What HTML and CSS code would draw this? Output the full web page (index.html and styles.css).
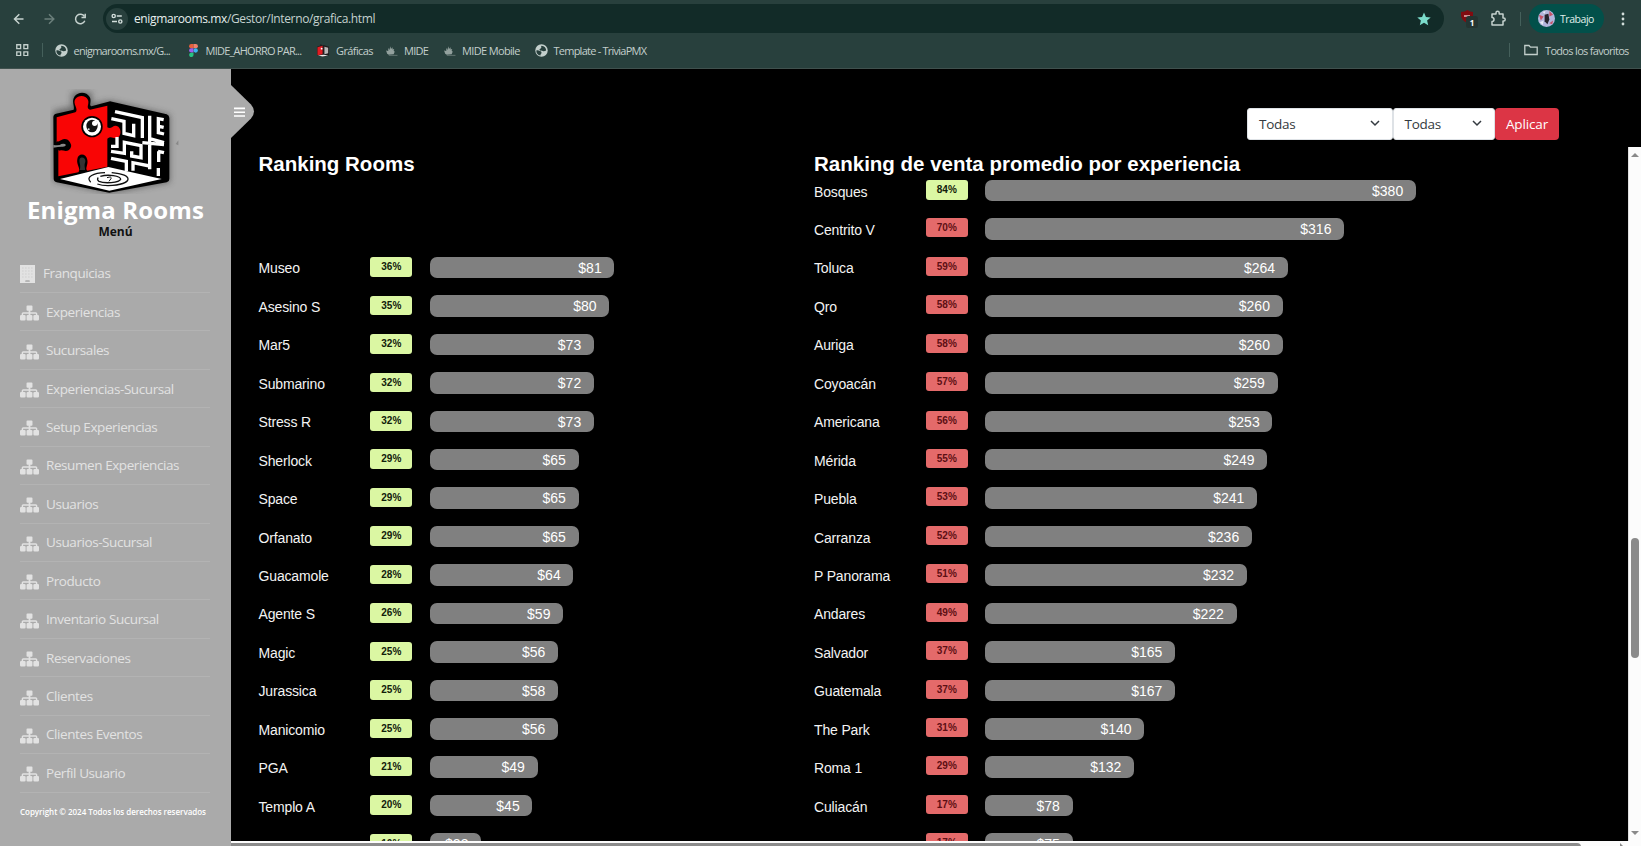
FILE: index.html
```html
<!DOCTYPE html>
<html lang="es">
<head>
<meta charset="utf-8">
<title>Enigma Rooms</title>
<link rel="stylesheet" href="styles.css">
<script src="app.js" defer></script>
</head>
<body>
<svg class="defs" aria-hidden="true">
  <symbol id="sitemap" viewBox="0 0 640 512"><path d="M250 0h140q30 0 30 30v120q0 30-30 30h-40v50h180q54 0 54 54v36h16q40 0 40 40v110q0 42-40 42H490q-40 0-40-42V360q0-40 40-40h44v-40H350v40h30q40 0 40 40v110q0 42-40 42H260q-40 0-40-42V360q0-40 40-40h30v-40H106v40h44q40 0 40 40v110q0 42-40 42H40q-40 0-40-42V360q0-40 40-40h16v-36q0-54 54-54h180v-50h-40q-30 0-30-30V30q0-30 30-30z"/></symbol>
  <symbol id="globe" viewBox="0 0 24 24"><circle cx="12" cy="12" r="11.5" fill="#c3cfcc"/><path d="M2.500 12C5 11 7 12.500 9 13s3 1 3 3-2 2-2 5C5 20.500 2 17 2.500 12zM12 3c-2 2 1 3-1 5s-3 1-2.500 3 4 1 6 2 4 0 6-1c0-5-3-8.500-8.500-9z" fill="#28403d"/></symbol>
  <symbol id="ship" viewBox="0 0 24 24"><path d="M2 12l4 1V7l2 4 2-7 1 5 3-3v4l3-1-1 4 2 1-2 5-9 1-3-2z" fill="#93a19e"/><path d="M7 21h16" stroke="#5d706d" stroke-width="2"/></symbol>
</svg>
<header class="browser">
  <div class="toolbar">
    <svg class="nav-icons" viewBox="0 0 92 24"><g fill="none" stroke="#c6d2cf" stroke-width="1.500"><path d="M9 12h-9M4.800 7.200L0 12l4.800 4.800" transform="translate(14.500 0)"/><path d="M44.500 12h9M49 7.200l4.800 4.800-4.800 4.800" stroke="#6b7f7b"/><path d="M84.500 9.500a4.800 4.800 0 1 0 .3 4.300"/><path d="M85.200 6.800v3.700h-3.700"/></g></svg>
    <div class="omnibox">
      <svg class="tune" viewBox="0 0 22 22"><circle cx="11" cy="11" r="11" fill="#28403d"/><g fill="none" stroke="#d3dedb" stroke-width="1.400"><circle cx="7.700" cy="8" r="1.600"/><path d="M10.800 8h5M6 13.500h5"/><circle cx="14.300" cy="13.500" r="1.600"/></g></svg>
      <span class="url"><b>enigmarooms.mx</b>/Gestor/Interno/grafica.html</span>
      <svg class="star" viewBox="0 0 24 24"><path d="M12 1l3.300 7.600 8.200.7-6.200 5.400 1.900 8-7.200-4.300-7.200 4.300 1.900-8L.5 9.300l8.200-.7z" fill="#7bdccb"/></svg>
    </div>
    <svg class="shield" viewBox="0 0 20 20"><path d="M1 3q4 0 6.500-2Q10 3 13 3v4q-1 5-5.500 7Q2 12 1 7z" fill="#800b10"/><path d="M4 7h6" stroke="#e9b8b8" stroke-width="1.500"/><rect x="6" y="7" width="12" height="12" rx="2.500" fill="#243532"/><text x="12" y="16.500" class="badge-count">1</text></svg>
    <svg class="puzzle" viewBox="0 0 18 18"><path d="M3 4h4V2.800a1.600 1.600 0 0 1 3.200 0V4H14v4h.7a1.500 1.500 0 0 1 0 3H14v4H3v-3.500a2 2 0 0 0 0-4z" fill="none" stroke="#c6d2cf" stroke-width="1.500" stroke-linejoin="round"/></svg>
    <span class="divider"></span>
    <div class="profile">
      <svg class="avatar" viewBox="0 0 18 18"><circle cx="9" cy="9" r="9" fill="#b3b6dc"/><path d="M1 5l5 2-3 4zM12 1l4 4-4 2zM12 14l4-3-1 4z" fill="#c75367"/><path d="M7 5l4-1 1 6-2 5-3-3z" fill="#26242d"/><path d="M2 13l4-2-1 5zM5 2l3-1-1 3z" fill="#e9edf6"/></svg>
      <span class="profile-name">Trabajo</span>
    </div>
    <svg class="dots" viewBox="0 0 4 14"><g fill="#d3dedb"><circle cx="2" cy="2" r="1.400"/><circle cx="2" cy="7" r="1.400"/><circle cx="2" cy="12" r="1.400"/></g></svg>
  </div>
  <nav class="bookmarks">
    <svg class="apps" viewBox="0 0 13 13"><g fill="none" stroke="#c3cfcc" stroke-width="1.400"><path d="M.8.8h4v4h-4zM8.200.8h4v4h-4zM.8 8.200h4v4h-4zM8.200 8.200h4v4h-4z"/></g></svg>
    <span class="divider first"></span>
    <span class="mark m1"><svg><use href="#globe"/></svg>enigmarooms.mx/G...</span>
    <span class="mark m2"><svg viewBox="0 0 12 16"><path d="M6 0v5.300H3.200a2.650 2.650 0 0 1 0-5.300z" fill="#e8603c"/><path d="M6 0h2.800a2.650 2.650 0 0 1 0 5.300H6z" fill="#f0806b"/><path d="M6 5.300v5.300H3.200a2.650 2.650 0 0 1 0-5.300z" fill="#9c5cec"/><circle cx="8.700" cy="8" r="2.650" fill="#3bb4f0"/><path d="M3.200 10.700H6v2.500a2.700 2.700 0 1 1-2.800-2.500z" fill="#27c281"/></svg>MIDE_AHORRO PAR...</span>
    <span class="mark m3"><svg viewBox="0 0 14 14"><path d="M0 3l3-1 1-2 2 1.500L7 1l6 2v9l-7 2-6-2z" fill="#211d1e"/><path d="M.5 3.500L6 1.800V11L.5 12z" fill="#e21c22"/><path d="M8 3l4 1v6l-4 1z" fill="#b9b6b6"/><path d="M1 12.500l6-1 5 1-6 1z" fill="#eee"/><circle cx="5" cy="5" r="1" fill="#fff"/></svg>Gráficas</span>
    <span class="mark m4"><svg><use href="#ship"/></svg>MIDE</span>
    <span class="mark m5"><svg><use href="#ship"/></svg>MIDE Mobile</span>
    <span class="mark m6"><svg><use href="#globe"/></svg>Template - TriviaPMX</span>
    <span class="divider last"></span>
    <span class="mark all"><svg viewBox="0 0 14 12"><path d="M.8 10.500V1.500H5l1.500 1.700h6.700v7.300z" fill="none" stroke="#c3cfcc" stroke-width="1.300"/></svg>Todos los favoritos</span>
  </nav>
</header>
<div class="page">
  <aside class="sidebar">
    <svg class="logo" viewBox="150 75 395 315">
      <defs><filter id="soft" x="-10%" y="-10%" width="120%" height="120%"><feGaussianBlur stdDeviation="9"/></filter></defs>
      <path d="M160 140L215 128V85H275V120L330 110 510 152V355L330 388 160 352z" fill="#333" opacity=".55" filter="url(#soft)"/>
      <path d="M160 160Q160 151 168 149L221 137C225 128 213 112 224 97C235 82 260 83 269 99C276 112 266 124 274 127L325 113Q330 111 336 113L500 151Q508 154 508 162V345Q508 353 500 355L335 385Q328 387 320 385L170 355Q161 352 161 344z" fill="#000"/>
      <path d="M170 160L226 145C238 137 216 118 226 105C235 92 258 93 264 108C269 120 256 132 270 137L322 125V190C335 198 340 178 355 188C366 198 362 220 350 222C338 225 335 214 322 224V308L262 320C254 313 265 304 262 288C258 266 234 267 232 285C228 302 244 314 235 325L175 337V257C190 250 193 263 205 255C216 245 205 226 190 229C180 232 180 239 170 235z" fill="#f90505"/>
      <path d="M239 318C244 305 236 295 239 285C245 276 258 282 256 293C251 305 256 311 255 318z" fill="#333"/>
      <path d="M170 235C180 239 180 232 190 229C205 226 216 245 205 255C193 263 190 250 175 257" fill="none" stroke="#000" stroke-width="7"/>
      <path d="M160 243q19 3 24-3 10-3 14 3-3 7-14 5-9 0-24 3z" fill="#888"/>
      <circle cx="276" cy="188" r="32" fill="#000"/><circle cx="276" cy="188" r="27" fill="#fff"/><ellipse cx="276" cy="186" rx="17" ry="19" fill="#111"/><circle cx="284" cy="178" r="8" fill="#fff"/><circle cx="266" cy="196" r="3" fill="#ddd"/>
      <g fill="none" stroke="#fff" stroke-width="10">
        <path d="M345 143L427 161V222M334 164l38 8v36l29 7v-36"/>
        <path d="M449 155V316M427 236l65 6M449 224l43 12"/>
        <path d="M491 167l-16-3v42l17 4M491 190l-14-3"/>
        <path d="M333 247h18v-28M333 262l40 6v-33l50 10v36l-28-5v-14M333 283l46 9v30M399 320v-24l50 10"/>
        <path d="M476 262v32M492 266l-18-4M475 312v24"/>
      </g>
      <path d="M180 345L325 309 485 345 328 380z" fill="#fff"/>
      <g fill="none" stroke="#111" stroke-width="4"><path d="M272 355C255 338 282 327 315 326M335 326C402 331 402 361 324 365C310 365 300 363 292 360"/><path d="M301 337C324 330 362 335 362 346C358 357 312 359 297 352C291 348 292 343 295 341"/><path d="M321 341q15-5 12 3l-6 8" stroke-width="3"/></g>
      <path d="M527 240l8-11v15z" fill="#888"/>
    </svg>
    <h1 class="brand">Enigma Rooms</h1>
    <p class="menu-title">Menú</p>
    <ul class="menu">
      <li><svg class="building" viewBox="0 0 15 18"><path d="M0 0h15v18H9.500v-2.500h-4V18H0z" fill="#e2e2e2"/><path d="M2 3h11M2 6h11M2 9h11M2 12h11" stroke="#d0d0d0" stroke-width="1.200" stroke-dasharray="1.600 1.400"/><path d="M5.500 15.500h4V17h-4z" fill="#aaa"/><path d="M0 16.800h15V18H0z" fill="#e2e2e2"/></svg><span class="near">Franquicias</span></li>
      <li><svg><use href="#sitemap"/></svg><span>Experiencias</span></li>
      <li><svg><use href="#sitemap"/></svg><span>Sucursales</span></li>
      <li><svg><use href="#sitemap"/></svg><span>Experiencias-Sucursal</span></li>
      <li><svg><use href="#sitemap"/></svg><span>Setup Experiencias</span></li>
      <li><svg><use href="#sitemap"/></svg><span>Resumen Experiencias</span></li>
      <li><svg><use href="#sitemap"/></svg><span>Usuarios</span></li>
      <li><svg><use href="#sitemap"/></svg><span>Usuarios-Sucursal</span></li>
      <li><svg><use href="#sitemap"/></svg><span>Producto</span></li>
      <li><svg><use href="#sitemap"/></svg><span>Inventario Sucursal</span></li>
      <li><svg><use href="#sitemap"/></svg><span>Reservaciones</span></li>
      <li><svg><use href="#sitemap"/></svg><span>Clientes</span></li>
      <li><svg><use href="#sitemap"/></svg><span>Clientes Eventos</span></li>
      <li><svg><use href="#sitemap"/></svg><span>Perfil Usuario</span></li>
    </ul>
    <p class="copyright">Copyright © 2024 Todos los derechos reservados</p>
    <svg class="handle" viewBox="0 0 24 54"><path d="M0 0L20 19.500Q26 26.500 20 33.500L0 53z" fill="#aaa"/><path d="M3 23.400h11M3 27.200h11M3 31h11" stroke="#fff" stroke-width="1.600"/></svg>
  </aside>
  <main class="content">
    <form class="filters">
      <div class="select wide"><span>Todas</span><svg viewBox="0 0 10 7"><path d="M1 1l4 4 4-4"/></svg></div>
      <div class="select"><span>Todas</span><svg viewBox="0 0 10 7"><path d="M1 1l4 4 4-4"/></svg></div>
      <button type="button" class="apply">Aplicar</button>
    </form>
    <div class="scroller">
      <div class="rankings">
        <section><h2>Ranking Rooms</h2><div class="rows offset" id="rooms"></div></section>
        <section><h2>Ranking de venta promedio por experiencia</h2><div class="rows" id="sales"></div></section>
      </div>
      <div class="vbar"><i class="up"></i><i class="thumb"></i><i class="down"></i></div>
    </div>
    <div class="hbar"><i class="hthumb"></i><i class="right"></i></div>
  </main>
</div>
</body>
</html>
```
FILE: styles.css
```css
* { box-sizing: border-box; }
body { margin: 0; width: 1641px; height: 846px; overflow: hidden; display: flex; flex-direction: column; background: #000; font-family: "Open Sans", "Noto Sans", sans-serif; }
h1, h2, p, ul { margin: 0; padding: 0; }
.defs { display: none; }
svg { display: block; flex: none; }

.browser { flex: none; height: 69px; background: #28403d; border-bottom: 1px solid #40514e; color: #c3cfcc; }
.toolbar { display: flex; align-items: center; height: 37px; }
.nav-icons { width: 92px; height: 24px; }
.omnibox { margin-left: 11px; width: 1341px; height: 29px; border-radius: 15px; background: #122b28; display: flex; align-items: center; padding: 0 13px 0 3px; }
.tune { width: 22px; height: 22px; }
.url { margin-left: 6px; flex: 1; font-size: 12px; letter-spacing: -.37px; color: #c5d2cf; white-space: nowrap; }
.url b { font-weight: 400; color: #e8f0ee; }
.star { width: 14px; height: 14px; }
.shield { width: 20px; height: 20px; margin: 0 0 0 16px; }
.badge-count { font: bold 8px "Open Sans", sans-serif; fill: #fff; text-anchor: middle; }
.puzzle { width: 18px; height: 18px; margin-left: 9px; }
.divider { width: 1px; height: 14px; background: #45605b; }
.toolbar .divider { margin-left: 13px; }
.profile { margin-left: 8px; width: 75px; height: 29px; border-radius: 15px; background: #02504a; display: flex; align-items: center; padding-left: 9px; }
.avatar { width: 17px; height: 17px; }
.profile-name { margin-left: 5px; font-size: 10.500px; color: #e0efec; letter-spacing: -.45px; }
.dots { width: 4px; height: 14px; margin-left: 17px; }

.bookmarks { display: flex; align-items: center; height: 26px; padding-left: 16px; font-size: 11px; }
.apps { width: 12.500px; height: 12.500px; }
.divider.first { margin: 0 12px 0 13px; }
.mark { display: flex; align-items: center; white-space: nowrap; letter-spacing: -.76px; }
.mark svg { width: 13px; height: 13px; margin-right: 6px; }
.m1 { width: 132px; letter-spacing: -.75px; }
.m2 { width: 130.500px; }
.m3 { width: 68px; letter-spacing: -.6px; }
.m4 { width: 58px; letter-spacing: -.7px; }
.m5 { width: 91.500px; letter-spacing: -.65px; }
.m6 { width: 130px; }
.divider.last { margin-left: auto; margin-right: 14px; }
.mark.all { width: 117px; letter-spacing: -.68px; }
.mark.all svg { width: 14px; height: 12px; margin-right: 7px; }

.page { flex: 1; display: flex; min-height: 0; }
.sidebar { position: relative; flex: none; width: 231px; background: #aaa; color: #fff; }
.logo { width: 131.700px; height: 105px; margin: 20px 0 0 50px; }
.brand { font-size: 24px; line-height: 28px; text-align: center; font-weight: 700; padding-top: 2px; letter-spacing: .12px; }
.menu-title { text-align: center; color: #111; font-weight: 700; font-size: 12px; line-height: 15px; }
.menu { list-style: none; margin: 15.500px 21px 0 20px; }
.menu li { display: flex; align-items: center; height: 38.450px; border-bottom: 1px solid #b3b3b3; font-size: 13.500px; letter-spacing: -.42px; color: #e2e2e2; }
.menu svg { width: 19px; height: 16px; fill: #e2e2e2; margin-top: 3px; }
.menu .building { width: 15px; height: 18px; margin-top: 1px; }
.menu span { margin-left: 7px; white-space: nowrap; }
.menu .near { margin-left: 8px; }
.copyright { margin: 12.500px 0 0 20px; font-size: 8px; line-height: 14px; font-weight: 600; white-space: nowrap; letter-spacing: -.03px; }
.handle { position: absolute; left: 231px; top: 15.500px; width: 24px; height: 54px; z-index: 2; }

.content { flex: 1; min-width: 0; display: flex; flex-direction: column; background: #000; }
.filters { display: flex; flex: none; justify-content: flex-end; height: 78px; padding: 38.600px 82px 0 0; }
.select { display: flex; align-items: center; justify-content: space-between; width: 102.500px; height: 32.400px; background: #fff; border: 1px solid #dee2e6; border-radius: 3px; padding: 0 12px 0 11px; font-size: 13.500px; color: #343a40; letter-spacing: -.25px; }
.select.wide { width: 145.500px; }
.select svg { width: 10px; height: 7px; fill: none; stroke: #343a40; stroke-width: 1.500; }
.apply { width: 64px; height: 32.400px; border: 0; border-radius: 4px; background: #dc3545; color: #fff; font: 13.500px "Open Sans", sans-serif; letter-spacing: -.15px; padding: 0; }

.scroller { flex: none; height: 693.500px; display: flex; overflow: hidden; }
.rankings { flex: 1; height: 693.500px; overflow: hidden; display: grid; grid-template-columns: 555.500px 1fr; padding-left: 27.500px; font-family: "Liberation Sans", Arial, sans-serif; color: #fff; }
.rankings h2 { font-size: 20.500px; line-height: 30.900px; padding-top: 2px; font-weight: 700; white-space: nowrap; }
.rows.offset { padding-top: 76.900px; }
.row { display: grid; grid-template-columns: 111.800px 59.700px 1fr; height: 38.450px; align-items: start; }
.label { font-size: 14px; line-height: 21.500px; padding-top: 1.700px; color: #f3f3f3; letter-spacing: -.15px; }
.pct { width: 42px; height: 19.500px; margin-top: .5px; border-radius: 3px; font-size: 10px; line-height: 19px; font-weight: 700; text-align: center; }
.pct.good { background: #dbf7a3; color: #11200a; }
.pct.bad { height: 19px; margin-top: 0; background: #e46a6a; color: #5d0f14; }
.bar { height: 21.500px; border-radius: 7px; background: #808080; text-align: right; padding-right: 12.800px; font-size: 14px; line-height: 22px; color: #fff; }

.vbar { width: 13px; height: 699px; background: #fcfcfc; border-left: 1px solid #e0e0e0; display: flex; flex-direction: column; align-items: center; }
.up, .down { border: 4px solid transparent; width: 0; height: 0; }
.up { border-bottom-color: #8a8a8a; border-top: 0; margin-top: 5.500px; }
.down { border-top-color: #8a8a8a; border-bottom: 0; margin-top: 172.500px; }
.thumb { width: 7.500px; height: 120px; border-radius: 4px; background: #8b8b8b; margin-top: 381.500px; }
.hbar { flex: 1; background: #fcfcfc; padding-top: 2px; display: flex; justify-content: space-between; overflow: hidden; }
.hthumb { width: 1350px; height: 7px; border-radius: 0 4px 0 0; background: #8b8b8b; }
.right { border: 4px solid transparent; border-left-color: #8a8a8a; border-right: 0; width: 0; height: 0; margin-right: 17px; }
```
FILE: app.js
```js
const rooms = [
  ["Museo", 36, 81], ["Asesino S", 35, 80], ["Mar5", 32, 73], ["Submarino", 32, 72],
  ["Stress R", 32, 73], ["Sherlock", 29, 65], ["Space", 29, 65], ["Orfanato", 29, 65],
  ["Guacamole", 28, 64], ["Agente S", 26, 59], ["Magic", 25, 56], ["Jurassica", 25, 58],
  ["Manicomio", 25, 56], ["PGA", 21, 49], ["Templo A", 20, 45], ["", 10, 23]
];
const sales = [
  ["Bosques", 84, 380], ["Centrito V", 70, 316], ["Toluca", 59, 264], ["Qro", 58, 260],
  ["Auriga", 58, 260], ["Coyoacán", 57, 259], ["Americana", 56, 253], ["Mérida", 55, 249],
  ["Puebla", 53, 241], ["Carranza", 52, 236], ["P Panorama", 51, 232], ["Andares", 49, 222],
  ["Salvador", 37, 165], ["Guatemala", 37, 167], ["The Park", 31, 140], ["Roma 1", 29, 132],
  ["Culiacán", 17, 78], ["", 17, 75]
];
const PX_PER_POINT = 5.125;

function draw(id, data, isGood) {
  document.getElementById(id).innerHTML = data.map(([name, pct, value]) => `
    <div class="row">
      <span class="label">${name}</span>
      <span class="pct ${isGood(pct) ? "good" : "bad"}">${pct}%</span>
      <div class="bar" style="width:${pct * PX_PER_POINT}px">$${value}</div>
    </div>`).join("");
}

draw("rooms", rooms, () => true);
draw("sales", sales, pct => pct > 75);
```
